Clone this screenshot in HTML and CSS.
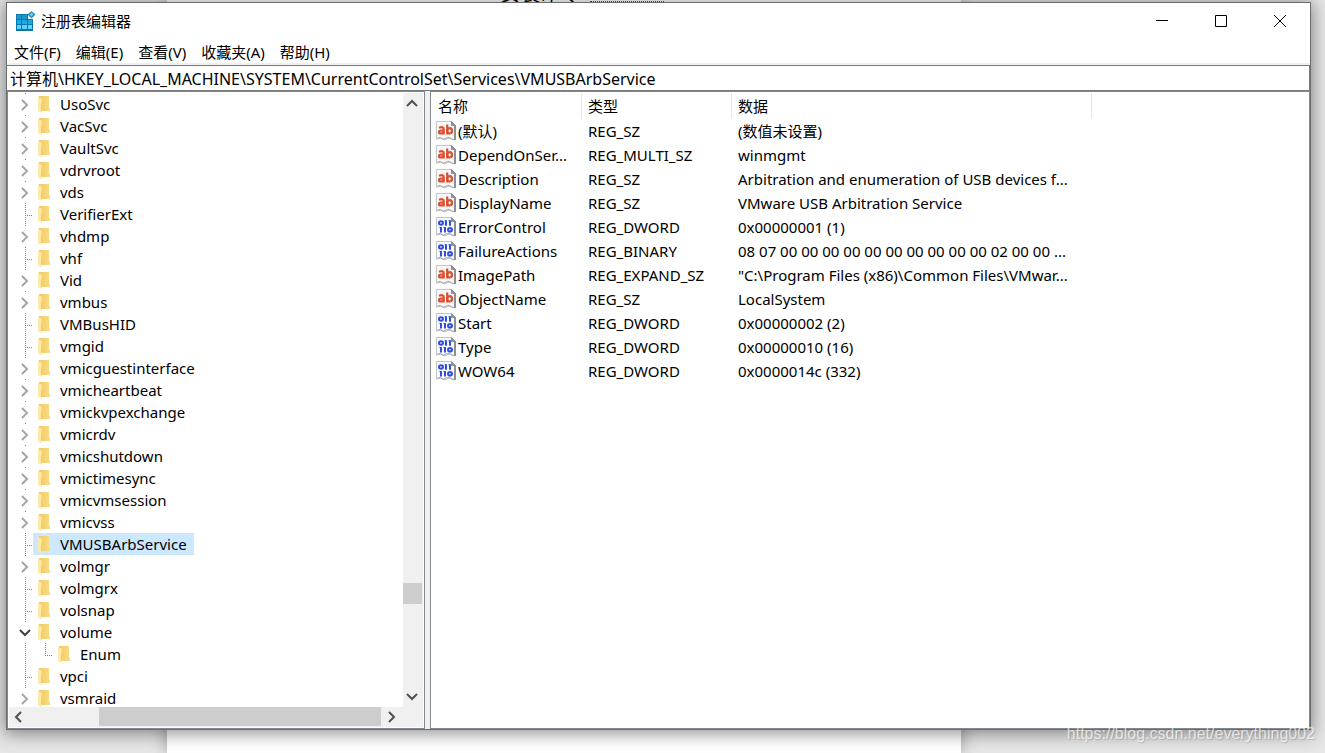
FILE: index.html
```html
<!DOCTYPE html>
<html lang="zh-CN">
<head>
<meta charset="utf-8">
<title>注册表编辑器</title>
<link rel="stylesheet" href="styles.css">
</head>
<body>
<svg class="defs" aria-hidden="true">
  <defs>
    <linearGradient id="gold" x1="0" x2="1" y1="0" y2="0"><stop offset="0" stop-color="#f0c963"/><stop offset="1" stop-color="#fadc84"/></linearGradient>
    <symbol id="folder" viewBox="0 0 12 17">
      <path d="M1 0h10v12h1v3H1z" fill="url(#gold)"/>
      <path d="M0 1l4 2v9l-1 5-3-2z" fill="#ffe9a6"/>
      <path d="M4 3v9l-1 5V12z" fill="#ecc55f"/>
    </symbol>
    <symbol id="chevron" viewBox="0 0 8 12"><path d="M1 1l5 5-5 5" fill="none" stroke="currentColor" stroke-width="2"/></symbol>
    <symbol id="page" viewBox="0 0 20 20">
      <path d="M.5.5h15l4 4v14l-2 .5-3-2-3 .5-3 1.500-3-2-5 1z" fill="#f8f8f9" stroke="#c4c5c7"/>
      <path d="M15.500.5v4h4z" fill="#909295" stroke="#8d8f92"/>
      <path d="M19 4v15" stroke="#8d8f92" stroke-width="2"/>
      <path d="M1 17.500l3-1 3 2 3-1.500 3.500-.5 3 2 2-.5" fill="none" stroke="#a1a3a6"/>
    </symbol>
    <symbol id="string" viewBox="0 0 20 20">
      <use href="#page"/>
      <g fill="none" stroke="#dc4f2e" stroke-width="2.200"><path d="M3 6.700q4.700-1.500 4.700 1.300v5.500M7.500 9.500H5q-2 .1-2 1.500 0 1.500 1.700 1.500 1.700 0 3-1.500M11.200 3.500v10"/><ellipse cx="13.600" cy="9.800" rx="2.400" ry="2.700"/></g>
    </symbol>
    <symbol id="binary" viewBox="0 0 20 20">
      <use href="#page"/>
      <g fill="none" stroke="#2f50dc" stroke-width="2"><ellipse cx="5" cy="6" rx="2" ry="1.800"/><path d="M10 3.200v5.600M14 3.200v5.600M5 10v5.600M9 10v5.600"/><path d="M8.500 3.700h1M12.500 3.700h1M3.500 10.500h1M7.500 10.500h1" stroke-width="1"/><ellipse cx="14" cy="12.800" rx="2" ry="1.800"/></g>
    </symbol>
  </defs>
</svg>
<div class="desktop">
  <div class="document"><span class="doc-text">安装命令</span><span class="squiggle"></span></div>
  <main class="window">
    <header class="titlebar">
      <svg class="app-icon" viewBox="0 0 20 20" aria-hidden="true">
        <path d="M0 3h12v5h5v12H0z" fill="#0b78ad"/>
        <path d="M1 4h4v4H1zM6 4h5v4H6z" fill="#1b9bcd"/>
        <path d="M1 9h4v4H1zM6 9h5v4H6zM12 9h4v4h-4z" fill="#20a9dc"/>
        <path d="M1 14h4v4H1zM6 14h5v4H6zM12 14h4v4h-4z" fill="#62d3f7"/>
        <path d="M15.500 0L19.500 3.500 15.500 7.500 11.500 3.500z" fill="#248fbd"/>
        <path d="M15.500 1.500l2 2-2 2-2-2z" fill="#7ac9e5"/>
      </svg>
      <h1 class="title">注册表编辑器</h1>
      <div class="controls">
        <button class="control" aria-label="最小化"><svg viewBox="0 0 12 12"><path d="M0 5.500h12"/></svg></button>
        <button class="control" aria-label="最大化"><svg viewBox="0 0 12 12"><path d="M.5.5h11v11H.5z"/></svg></button>
        <button class="control" aria-label="关闭"><svg viewBox="0 0 12 12"><path d="M0 0l12 12M12 0L0 12"/></svg></button>
      </div>
    </header>
    <nav class="menubar">
      <button>文件(F)</button><button>编辑(E)</button><button>查看(V)</button><button>收藏夹(A)</button><button>帮助(H)</button>
    </nav>
    <input class="address" aria-label="地址" value="计算机\HKEY_LOCAL_MACHINE\SYSTEM\CurrentControlSet\Services\VMUSBArbService">
    <div class="panes">
      <section class="tree-pane">
        <ul class="tree" id="tree"></ul>
        <div class="vscroll">
          <button class="arrow up" aria-label="向上滚动"><svg viewBox="0 0 8 12"><use href="#chevron"/></svg></button>
          <div class="track"><div class="thumb"></div></div>
          <button class="arrow down" aria-label="向下滚动"><svg viewBox="0 0 8 12"><use href="#chevron"/></svg></button>
        </div>
        <div class="hscroll">
          <button class="arrow left" aria-label="向左滚动"><svg viewBox="0 0 8 12"><use href="#chevron"/></svg></button>
          <div class="track"><div class="thumb"></div></div>
          <button class="arrow right" aria-label="向右滚动"><svg viewBox="0 0 8 12"><use href="#chevron"/></svg></button>
        </div>
      </section>
      <section class="list-pane">
        <table class="values">
          <colgroup><col class="c-name"><col class="c-type"><col class="c-data"><col></colgroup>
          <thead><tr><th>名称</th><th>类型</th><th>数据</th><th class="rest"></th></tr></thead>
          <tbody id="values"></tbody>
        </table>
      </section>
    </div>
  </main>
  <div class="watermark">https://blog.csdn.net/everything002</div>
</div>
<script src="app.js"></script>
</body>
</html>
```
FILE: styles.css
```css
* { box-sizing: border-box; }
body {
  margin: 0;
  font: 15px/22px "Noto Sans", "Noto Sans CJK SC", sans-serif;
  color: #000;
}
button { margin: 0; padding: 0; border: 0; background: none; font: inherit; color: inherit; }
.defs { position: absolute; width: 0; height: 0; }
.desktop {
  position: relative;
  height: 100vh;
  padding: 2px 14px 23px 6px;
  background: #e6e6e6;
  overflow: hidden;
}
.document {
  position: absolute;
  top: 0;
  bottom: 0;
  left: 167px;
  width: 794px;
  background: #fff;
  box-shadow: 0 0 16px rgba(0, 0, 0, .3);
}
.doc-text { position: absolute; left: 333px; top: -16px; font-size: 20px; line-height: 20px; }
.squiggle { position: absolute; left: 423px; top: 1px; width: 74px; border-top: 1px dotted #e02020; }
.window {
  position: relative;
  display: flex;
  flex-direction: column;
  height: 100%;
  background: #fff;
  border: 1px solid #6b6c6e;
  box-shadow: 0 2px 16px 2px rgba(0, 0, 0, .42);
}

.titlebar { display: flex; align-items: center; height: 38px; padding: 0 1px 2px 9px; }
.app-icon { width: 20px; height: 20px; margin-right: 5px; }
.title { margin: 0; font-size: 15px; font-weight: 400; }
.controls { display: flex; margin-left: auto; }
.control { width: 59px; height: 36px; display: grid; place-items: center; }
.control svg { width: 12px; height: 12px; fill: none; stroke: #000; }
.menubar { display: flex; gap: 15px; height: 24px; padding-left: 7px; border-bottom: 2px solid #f0f0f0; }
.address {
  height: 26px;
  padding: 0 3px;
  border: 1px solid #7a7a7a;
  border-left: 0;
  border-radius: 0;
  outline: 0;
  font: inherit;
  font-size: 16px;
  color: inherit;
  background: #fff;
}

.panes { flex: 1; min-height: 0; display: flex; gap: 5px; background: #f0f0f0; }
.tree-pane, .list-pane { border: 1px solid #828790; background: #fff; min-width: 0; }
.tree-pane {
  width: 418px;
  flex: none;
  padding: 1px;
  display: grid;
  grid-template-columns: 1fr 20px;
  grid-template-rows: 1fr 20px;
}
.list-pane { flex: 1; padding-top: 1px; overflow: hidden; }
.tree { margin: 0; padding: 0; list-style: none; overflow: hidden; min-height: 0; }
.row { display: flex; height: 22px; }
.guide {
  width: 24px;
  flex: none;
  display: grid;
  justify-items: center;
  align-items: center;
  padding-left: 8px;
  background:
    repeating-linear-gradient(#808080 0 1px, #fff 1px 2px) 16px 0 / 1px 22px no-repeat;
}
.leaf .guide {
  background:
    repeating-linear-gradient(#808080 0 1px, #fff 1px 2px) 16px 0 / 1px 22px no-repeat,
    repeating-linear-gradient(90deg, #808080 0 1px, #fff 1px 2px) 18px 12px / 7px 1px no-repeat;
}
.branch .guide { background: linear-gradient(#808080, #808080) 16px 0 / 1px 1px no-repeat; }
.elbow {
  width: 20px;
  flex: none;
  background:
    repeating-linear-gradient(#808080 0 1px, #fff 1px 2px) 12px 0 / 1px 12px no-repeat,
    repeating-linear-gradient(90deg, #808080 0 1px, #fff 1px 2px) 12px 12px / 9px 1px no-repeat;
}
.toggle { width: 16px; height: 20px; display: grid; place-items: center; color: #a6a6a6; padding-top: 2px; }
.toggle svg, .arrow svg { width: 8px; height: 12px; }
.open .toggle { color: #404040; }
.open .toggle svg { transform: rotate(90deg); }
.key { display: flex; align-items: center; padding: 0 7px 0 5px; gap: 10px; }
.key svg { width: 12px; height: 17px; }
.selected .key { background: #cce8ff; }

.vscroll, .hscroll { display: flex; background: #f0f0f0; color: #505050; }
.vscroll { flex-direction: column; }
.hscroll { grid-column: 1 / -1; padding-right: 20px; }
.track { flex: 1; display: flex; }
.vscroll .track { flex-direction: column; }
.arrow { width: 20px; height: 20px; display: grid; place-items: center; flex: none; padding-right: 2px; }
.up svg { transform: rotate(-90deg); }
.down svg { transform: rotate(90deg); }
.left svg { transform: rotate(180deg); }
.thumb { background: #cdcdcd; }
.vscroll .thumb { width: 19px; height: 21px; margin-top: 470px; }
.hscroll .thumb { width: 282px; height: 19px; margin-left: 70px; }

.values { width: 100%; border-collapse: separate; border-spacing: 0; table-layout: fixed; line-height: 24px; }
.c-name { width: 151px; }
.c-type { width: 150px; }
.c-data { width: 360px; }
.values th { height: 26px; padding: 0 6px; text-align: left; font-weight: 400; border-right: 1px solid #e5e5e5; }
.values th:first-child { padding-left: 7px; }
.values .rest { border: 0; }
.values td { height: 24px; padding: 0 6px; white-space: nowrap; overflow: hidden; }
.values td:first-child { padding: 0 0 0 5px; }
.value { display: flex; align-items: center; gap: 2px; }
.value svg { width: 20px; height: 20px; flex: none; }

.watermark {
  position: absolute;
  right: 10px;
  bottom: 9px;
  font: 16px/20px "Liberation Sans", Arial, sans-serif;
  color: rgba(255, 255, 255, .7);
  text-shadow: 1px 1px 1px rgba(0, 0, 0, .15);
}
```
FILE: app.js
```js
// "+" marks a collapsed branch, "-" an open one, ">" a child, "*" the selected key.
const keys = [
  "+UsoSvc", "+VacSvc", "+VaultSvc", "+vdrvroot", "+vds", "VerifierExt", "+vhdmp", "vhf",
  "+Vid", "+vmbus", "VMBusHID", "vmgid", "+vmicguestinterface", "+vmicheartbeat",
  "+vmickvpexchange", "+vmicrdv", "+vmicshutdown", "+vmictimesync", "+vmicvmsession",
  "+vmicvss", "*VMUSBArbService", "+volmgr", "volmgrx", "volsnap", "-volume", ">Enum",
  "vpci", "+vsmraid"
];
const kinds = { "+": "branch", "-": "branch open", ">": "child", "*": "leaf selected" };
const icon = (name, box) => `<svg viewBox="0 0 ${box}" aria-hidden="true"><use href="#${name}"/></svg>`;

document.getElementById("tree").innerHTML = keys.map(key => {
  const kind = kinds[key[0]] || "leaf";
  const name = key.replace(/^[-+>*]/, "");
  const toggle = kind.startsWith("branch")
    ? `<button class="toggle" aria-label="${name}">${icon("chevron", "8 12")}</button>` : "";
  const elbow = kind === "child" ? '<span class="elbow"></span>' : "";
  return `<li class="row ${kind}"><span class="guide">${toggle}</span>${elbow}<button class="key">${icon("folder", "12 17")}${name}</button></li>`;
}).join("");

const values = [
  ["string", "(默认)", "REG_SZ", "(数值未设置)"],
  ["string", "DependOnSer...", "REG_MULTI_SZ", "winmgmt"],
  ["string", "Description", "REG_SZ", "Arbitration and enumeration of USB devices f..."],
  ["string", "DisplayName", "REG_SZ", "VMware USB Arbitration Service"],
  ["binary", "ErrorControl", "REG_DWORD", "0x00000001 (1)"],
  ["binary", "FailureActions", "REG_BINARY", "08 07 00 00 00 00 00 00 00 00 00 00 02 00 00 ..."],
  ["string", "ImagePath", "REG_EXPAND_SZ", "\"C:\\Program Files (x86)\\Common Files\\VMwar..."],
  ["string", "ObjectName", "REG_SZ", "LocalSystem"],
  ["binary", "Start", "REG_DWORD", "0x00000002 (2)"],
  ["binary", "Type", "REG_DWORD", "0x00000010 (16)"],
  ["binary", "WOW64", "REG_DWORD", "0x0000014c (332)"]
];
document.getElementById("values").innerHTML = values.map(([kind, name, type, data]) =>
  `<tr><td><span class="value">${icon(kind, "20 20")}${name}</span></td><td>${type}</td><td>${data}</td><td></td></tr>`
).join("");
```
